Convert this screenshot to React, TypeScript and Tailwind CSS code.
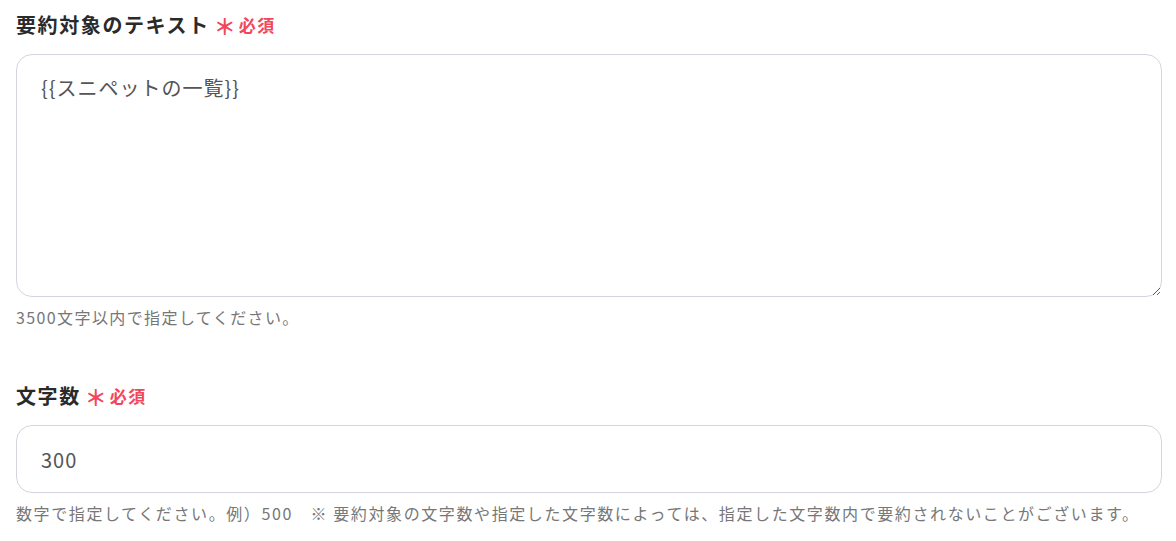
import React from "react";

const font = { fontFamily: '"Noto Sans CJK JP", "Noto Sans", sans-serif' };

const Required = () => (
	<span className="ml-[4px] inline-flex items-center text-[#f2465c] font-bold tracking-normal">
		<span className="text-[22px] leading-none mr-[3px]">＊</span>
		<span className="text-[17px] tracking-[1.5px]">必須</span>
	</span>
);

const App = () => {
	return (
		<div className="bg-white w-[1176px] h-[541px] pl-4 pr-[14px] text-[#333]" style={font}>
			<div className="pt-[10px]">
				<label className="flex items-center h-[30px] text-[20px] font-bold tracking-[1.6px] text-[#2a2a2a]">
					要約対象のテキスト
					<Required />
				</label>
				<textarea
					className="mt-[14px] block w-full h-[243px] rounded-2xl border border-[#d2d6dc] px-6 py-[18px] text-[20px] tracking-[1px] text-[#555] outline-none"
					defaultValue="{{スニペットの一覧}}"
				/>
				<p className="mt-[8px] text-[16px] tracking-[1.4px] text-[#777]">3500文字以内で指定してください。</p>
			</div>
			<div className="mt-[52px]">
				<label className="flex items-center h-[30px] text-[20px] font-bold tracking-[1.6px] text-[#2a2a2a]">
					文字数
					<Required />
				</label>
				<input
					className="mt-[14px] block w-full h-[68px] rounded-2xl border border-[#d2d6dc] px-6 text-[20px] tracking-[1px] text-[#555] outline-none"
					defaultValue="300"
				/>
				<p className="mt-[8px] text-[16px] tracking-[1.6px] text-[#777]">
					数字で指定してください。例）500　※ 要約対象の文字数や指定した文字数によっては、指定した文字数内で要約されないことがございます。
				</p>
			</div>
		</div>
	);
};

export default App;
